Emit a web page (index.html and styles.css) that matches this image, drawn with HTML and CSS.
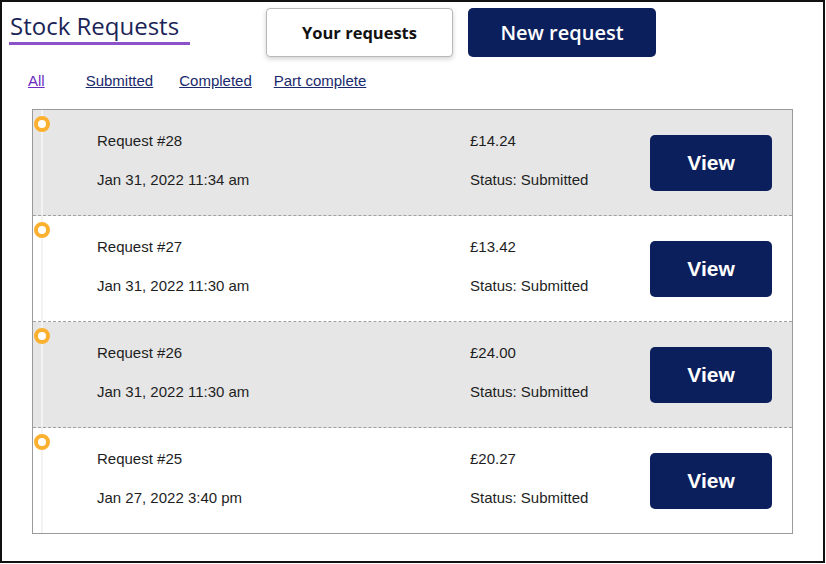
FILE: index.html
```html
<!DOCTYPE html>
<html>
<head>
<meta charset="utf-8">
<link rel="stylesheet" href="styles.css">
</head>
<body>
<div class="frame">
  <div class="header">
    <div class="title">Stock Requests</div>
    <button class="btn-outline">Your requests</button>
    <button class="btn-solid">New request</button>
  </div>
  <div class="filters">
    <a href="#" class="f f-all">All</a>
    <a href="#" class="f f-sub">Submitted</a>
    <a href="#" class="f f-comp">Completed</a>
    <a href="#" class="f">Part complete</a>
  </div>
  <div class="list">
    <div class="row grey">
      <div class="track"><span class="dot"></span></div>
      <div class="col info"><div>Request #28</div><div>Jan 31, 2022 11:34 am</div></div>
      <div class="col money"><div>£14.24</div><div>Status: Submitted</div></div>
      <button class="view">View</button>
    </div>
    <div class="row">
      <div class="track"><span class="dot"></span></div>
      <div class="col info"><div>Request #27</div><div>Jan 31, 2022 11:30 am</div></div>
      <div class="col money"><div>£13.42</div><div>Status: Submitted</div></div>
      <button class="view">View</button>
    </div>
    <div class="row grey">
      <div class="track"><span class="dot"></span></div>
      <div class="col info"><div>Request #26</div><div>Jan 31, 2022 11:30 am</div></div>
      <div class="col money"><div>£24.00</div><div>Status: Submitted</div></div>
      <button class="view">View</button>
    </div>
    <div class="row">
      <div class="track"><span class="dot"></span></div>
      <div class="col info"><div>Request #25</div><div>Jan 27, 2022 3:40 pm</div></div>
      <div class="col money"><div>£20.27</div><div>Status: Submitted</div></div>
      <button class="view">View</button>
    </div>
  </div>
</div>
</body>
</html>
```
FILE: styles.css
```css
* { box-sizing: border-box; }
html, body { margin: 0; padding: 0; background: #fff; }
.frame {
  width: 825px;
  height: 563px;
  border: 2px solid #111;
  font-family: "Liberation Sans", Arial, sans-serif;
  color: #222;
}
.header {
  display: flex;
  align-items: flex-start;
  padding-top: 6px;
  padding-left: 7px;
}
.title {
  width: 181px;
  margin-top: 4px;
  padding-left: 1px;
  font-family: "Open Sans", sans-serif;
  font-size: 24px;
  line-height: 28px;
  color: #1b2456;
  border-bottom: 3px solid #8b52c9;
  padding-bottom: 2px;
  white-space: nowrap;
}
.btn-outline {
  margin-left: 76px;
  width: 187px;
  height: 49px;
  background: #fff;
  border: 1px solid #b8b8b8;
  border-radius: 4px;
  box-shadow: 0 2px 5px rgba(0,0,0,0.18);
  font-family: "Open Sans", sans-serif;
  font-weight: 700;
  font-size: 16.5px;
  color: #111;
  padding: 0;
}
.btn-solid {
  margin-left: 15px;
  width: 188px;
  height: 49px;
  background: #0b1f5c;
  border: none;
  border-radius: 5px;
  font-family: "Open Sans", sans-serif;
  font-weight: 600;
  font-size: 20px;
  color: #fff;
  padding: 0;
}
.filters {
  display: flex;
  padding-left: 26px;
  margin-top: 15px;
  font-size: 15px;
  line-height: 17px;
}
.f { color: #1a2a6c; text-decoration: underline; margin-right: 22px; }
.f-all { color: #6a2dc0; margin-right: 41px; }
.f-sub { margin-right: 26px; }
.list {
  margin-left: 30px;
  margin-top: 20px;
  width: 761px;
  border: 1px solid #9a9a9a;
}
.row {
  display: flex;
  align-items: flex-start;
  height: 106px;
  border-bottom: 1px dashed #a0a0a0;
  background: #fff;
}
.row:last-child { border-bottom: none; height: 105px; }
.row.grey { background: #e6e6e6; }
.track {
  flex: none;
  width: 16px;
  height: 100%;
  margin-left: 1px;
  margin-right: 47px;
  background: linear-gradient(to right, transparent 7px, #f3f3f3 7px, #f3f3f3 9px, transparent 9px);
  padding-top: 6px;
}
.dot {
  display: block;
  width: 16px;
  height: 16px;
  border-radius: 50%;
  border: 4px solid #fbb12f;
  background: #fff;
}
.col {
  flex: none;
  display: flex;
  flex-direction: column;
  gap: 22px;
  padding-top: 22px;
  font-size: 15px;
  line-height: 17px;
  color: #1e1e1e;
}
.info { width: 373px; }
.money { width: 180px; }
.view {
  flex: none;
  margin-top: 25px;
  width: 122px;
  height: 56px;
  background: #0b1f5c;
  color: #fff;
  border: none;
  border-radius: 5px;
  font-family: "Liberation Sans", Arial, sans-serif;
  font-weight: 700;
  font-size: 21px;
  padding: 0;
}
```
